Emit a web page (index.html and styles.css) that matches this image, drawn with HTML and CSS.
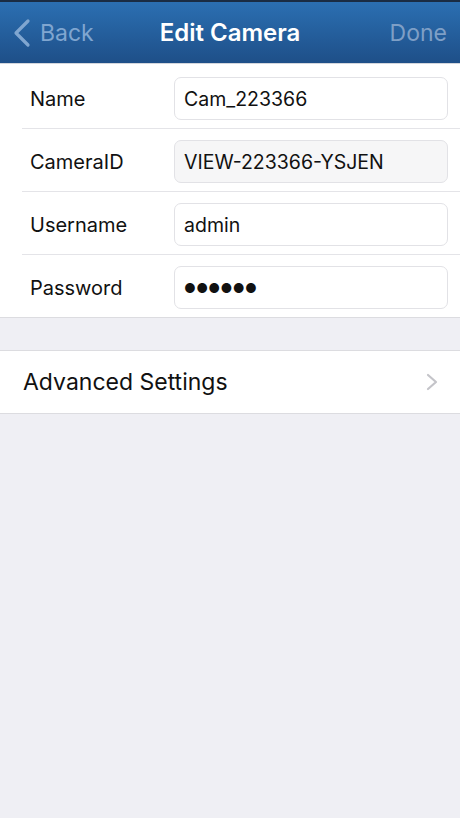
FILE: index.html
```html
<!DOCTYPE html>
<html lang="en">
<head>
    <meta charset="UTF-8">
    <meta name="viewport" content="width=device-width, initial-scale=1.0">
    <title>Edit Camera</title>
    <link rel="stylesheet" href="styles.css">
</head>
<body>
    <header class="nav-bar">
        <a class="nav-back" href="#">
            <svg class="back-chevron" width="20" height="30" viewBox="0 0 20 30">
                <path d="M16 3 L4 15 L16 27" fill="none" stroke="currentColor" stroke-width="3.2" stroke-linecap="round" stroke-linejoin="round"/>
            </svg>
            <span>Back</span>
        </a>
        <h1 class="nav-title">Edit Camera</h1>
        <a class="nav-done" href="#">Done</a>
    </header>

    <form class="camera-form" id="edit-camera-form">
        <div class="form-row">
            <label for="name">Name</label>
            <input type="text" id="name" value="Cam_223366" />
        </div>
        <div class="form-row">
            <label for="cameraId">CameraID</label>
            <input type="text" id="cameraId" value="VIEW-223366-YSJEN" class="readonly" readonly />
        </div>
        <div class="form-row">
            <label for="username">Username</label>
            <input type="text" id="username" value="admin" />
        </div>
        <div class="form-row">
            <label for="password">Password</label>
            <input type="text" id="password" value="●●●●●●" class="dots" />
        </div>
    </form>

    <a class="settings-row" href="#">
        <span>Advanced Settings</span>
        <svg class="row-chevron" width="12" height="18" viewBox="0 0 12 18">
            <path d="M2 2 L10 9 L2 16" fill="none" stroke="currentColor" stroke-width="2.2" stroke-linecap="round" stroke-linejoin="round"/>
        </svg>
    </a>
</body>
</html>
```

FILE: styles.css
```css
body {
    font-family: 'Inter', 'Roboto', sans-serif;
    background: #efeff4;
    color: #111;
    margin: 0;
    min-height: 100vh;
}

a {
    text-decoration: none;
}

.nav-bar {
    height: 64px;
    display: flex;
    align-items: center;
    justify-content: space-between;
    padding: 0 13px 0 12px;
    background: linear-gradient(to bottom, #2b6fb2, #1e4f88);
    border-top: 2px solid #1a2c44;
    border-bottom: 1px solid #d3d6dc;
    box-sizing: border-box;
    position: relative;
}

.nav-back {
    display: flex;
    align-items: center;
    gap: 8px;
    color: #80a6d0;
    font-size: 23px;
}

.back-chevron {
    margin-top: 1px;
}

.nav-title {
    position: absolute;
    left: 0;
    right: 0;
    text-align: center;
    margin: 0;
    font-size: 24px;
    font-weight: 600;
    color: #fff;
    pointer-events: none;
}

.nav-done {
    color: #7e9fc6;
    font-size: 23px;
}

.camera-form {
    background: #fff;
    border-bottom: 1px solid #dcdce0;
}

.form-row {
    display: flex;
    align-items: center;
    padding: 13px 12px 8px 30px;
    position: relative;
}

.form-row + .form-row {
    padding-top: 12px;
}

.form-row + .form-row::before {
    content: "";
    position: absolute;
    top: 0;
    left: 22px;
    right: 0;
    border-top: 1px solid #e4e4e8;
}

.form-row label {
    flex: none;
    width: 144px;
    font-size: 20px;
    font-weight: 400;
    color: #111;
}

.form-row input {
    flex: 1;
    min-width: 0;
    height: 43px;
    padding: 0 9px;
    border: 1px solid #e2e2e6;
    border-radius: 7px;
    font-family: inherit;
    font-size: 19.5px;
    color: #111;
    background: #fff;
    box-sizing: border-box;
    outline: none;
}

.form-row input.readonly {
    background: #f6f6f7;
}

.form-row input.dots {
    font-size: 13px;
    letter-spacing: 0.3px;
}

.settings-row {
    display: flex;
    align-items: center;
    justify-content: space-between;
    height: 64px;
    margin-top: 32px;
    padding: 0 22px 0 23px;
    background: #fff;
    border-top: 1px solid #dcdce0;
    border-bottom: 1px solid #dcdce0;
    box-sizing: border-box;
    color: #111;
    font-size: 23px;
}

.row-chevron {
    color: #c4c4c9;
}
```
